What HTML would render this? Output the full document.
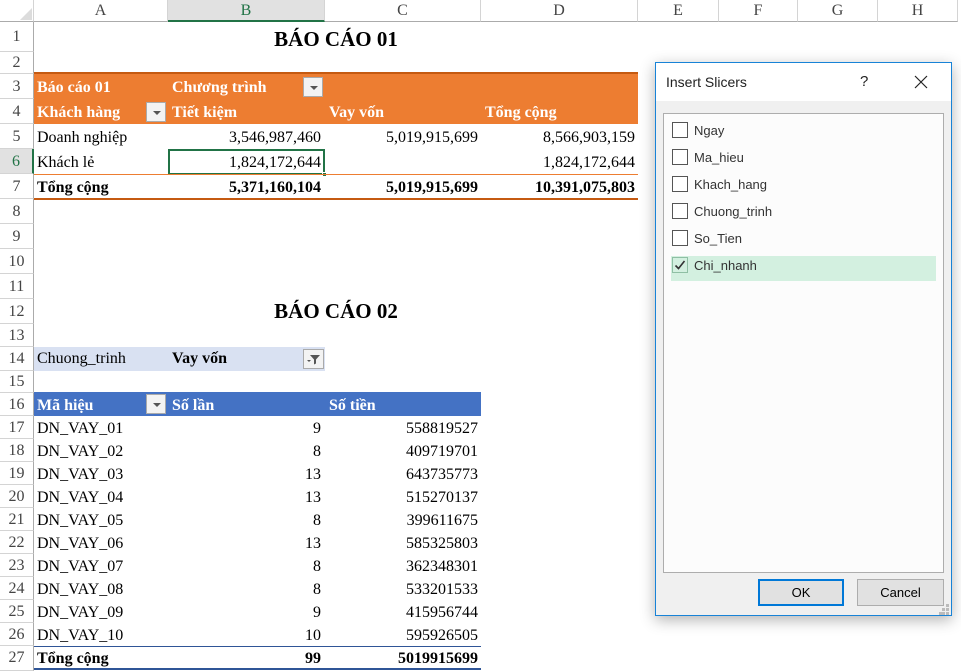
<!DOCTYPE html>
<html><head><meta charset="utf-8"><style>
*{margin:0;padding:0;box-sizing:border-box}
body{width:961px;height:671px;overflow:hidden;background:#fff;position:relative;font-family:"Liberation Serif","Noto Serif CJK SC",serif;font-size:16px;color:#000}
.a{position:absolute;white-space:nowrap}
.ch{position:absolute;top:0;height:22px;border-right:1px solid #d4d4d4;border-bottom:1px solid #ababab;text-align:center;line-height:22px;color:#444;font-size:16px}
.rh{position:absolute;left:0;width:34px;border-bottom:1px solid #d4d4d4;border-right:1px solid #ababab;text-align:center;color:#444}
.t{position:absolute;white-space:nowrap;line-height:1}
.r{text-align:right}
.b{font-weight:bold}
.btn{position:absolute;width:20px;height:20px;background:#f3f3f3;border:1px solid #aaa}
.btn:after{content:"";position:absolute;left:6px;top:8px;border-left:4px solid transparent;border-right:4px solid transparent;border-top:4px solid #555}
.cb{position:absolute;left:672px;width:16px;height:16px;border:1px solid #555;background:#fff}
.lbl{position:absolute;left:694px;font-family:"Liberation Sans",sans-serif;font-size:13px;color:#333}
</style></head><body>
<!-- column headers -->
<div class="ch" style="left:0;width:34px;background:#fff"></div>
<div class="a" style="left:20px;top:8px;border-left:12px solid transparent;border-bottom:12px solid #dcdcdc"></div>
<div class="ch" style="left:34px;width:134px">A</div>
<div class="ch" style="left:168px;width:157px;background:#e1e1e1;color:#217346;border-bottom:2px solid #217346">B</div>
<div class="ch" style="left:325px;width:156px">C</div>
<div class="ch" style="left:481px;width:157px">D</div>
<div class="ch" style="left:638px;width:81px">E</div>
<div class="ch" style="left:719px;width:79px">F</div>
<div class="ch" style="left:798px;width:80px">G</div>
<div class="ch" style="left:878px;width:80px">H</div>
<!-- row headers -->
<div class="rh" style="top:22px;height:30px;line-height:30px">1</div>
<div class="rh" style="top:52px;height:22px;line-height:22px">2</div>
<div class="rh" style="top:74px;height:25px;line-height:25px">3</div>
<div class="rh" style="top:99px;height:25px;line-height:25px">4</div>
<div class="rh" style="top:124px;height:25px;line-height:25px">5</div>
<div class="rh" style="top:149px;height:25px;line-height:25px;background:#e1e1e1;color:#217346;border-right:2px solid #217346">6</div>
<div class="rh" style="top:174px;height:25px;line-height:25px">7</div>
<div class="rh" style="top:199px;height:25px;line-height:25px">8</div>
<div class="rh" style="top:224px;height:25px;line-height:25px">9</div>
<div class="rh" style="top:249px;height:25px;line-height:25px">10</div>
<div class="rh" style="top:274px;height:25px;line-height:25px">11</div>
<div class="rh" style="top:299px;height:25px;line-height:25px">12</div>
<div class="rh" style="top:324px;height:23px;line-height:23px">13</div>
<div class="rh" style="top:347px;height:24px;line-height:24px">14</div>
<div class="rh" style="top:371px;height:22px;line-height:22px">15</div>
<div class="rh" style="top:393px;height:23px;line-height:23px">16</div>
<div class="rh" style="top:416px;height:23px;line-height:23px">17</div>
<div class="rh" style="top:439px;height:23px;line-height:23px">18</div>
<div class="rh" style="top:462px;height:23px;line-height:23px">19</div>
<div class="rh" style="top:485px;height:23px;line-height:23px">20</div>
<div class="rh" style="top:508px;height:23px;line-height:23px">21</div>
<div class="rh" style="top:531px;height:23px;line-height:23px">22</div>
<div class="rh" style="top:554px;height:23px;line-height:23px">23</div>
<div class="rh" style="top:577px;height:23px;line-height:23px">24</div>
<div class="rh" style="top:600px;height:23px;line-height:23px">25</div>
<div class="rh" style="top:623px;height:23px;line-height:23px">26</div>
<div class="rh" style="top:646px;height:25px;line-height:23px">27</div>

<!-- Report 01 -->
<div class="t b" style="left:34px;width:604px;top:29px;text-align:center;font-size:21px">BÁO CÁO 01</div>
<div class="a" style="left:34px;top:72px;width:604px;height:52px;background:#ED7D31;border-top:2px solid #C55A11"></div>
<div class="t b" style="left:37px;top:80px;color:#fff">Báo cáo 01</div>
<div class="t b" style="left:172px;top:80px;color:#fff">Chương trình</div>
<div class="btn" style="left:303px;top:77px"></div>
<div class="t b" style="left:37px;top:105px;color:#fff">Khách hàng</div>
<div class="btn" style="left:146px;top:102px"></div>
<div class="t b" style="left:172px;top:105px;color:#fff">Tiết kiệm</div>
<div class="t b" style="left:329px;top:105px;color:#fff">Vay vốn</div>
<div class="t b" style="left:485px;top:105px;color:#fff">Tổng cộng</div>

<div class="t" style="left:37px;top:130px">Doanh nghiệp</div>
<div class="t r" style="left:168px;width:153px;top:130px">3,546,987,460</div>
<div class="t r" style="left:325px;width:153px;top:130px">5,019,915,699</div>
<div class="t r" style="left:481px;width:154px;top:130px">8,566,903,159</div>
<div class="t" style="left:37px;top:155px">Khách lẻ</div>
<div class="t r" style="left:168px;width:153px;top:155px">1,824,172,644</div>
<div class="t r" style="left:481px;width:154px;top:155px">1,824,172,644</div>
<div class="a" style="left:168px;top:149px;width:157px;height:26px;border:2px solid #217346"></div>
<div class="a" style="left:322px;top:172px;width:5px;height:5px;background:#217346;border:1px solid #fff"></div>
<div class="a" style="left:34px;top:174px;width:604px;height:26px;border-top:1px solid #ED7D31;border-bottom:2px solid #C55A11"></div>
<div class="t b" style="left:37px;top:180px">Tổng cộng</div>
<div class="t b r" style="left:168px;width:153px;top:180px">5,371,160,104</div>
<div class="t b r" style="left:325px;width:153px;top:180px">5,019,915,699</div>
<div class="t b r" style="left:481px;width:154px;top:180px">10,391,075,803</div>

<!-- Report 02 -->
<div class="t b" style="left:34px;width:604px;top:301px;text-align:center;font-size:21px">BÁO CÁO 02</div>
<div class="a" style="left:34px;top:347px;width:291px;height:24px;background:#D9E1F2"></div>
<div class="t" style="left:37px;top:351px">Chuong_trinh</div>
<div class="t b" style="left:172px;top:351px">Vay vốn</div>
<div class="a" style="left:303px;top:349px;width:21px;height:20px;background:#f3f3f3;border:1px solid #aaa">
<svg width="19" height="18" viewBox="0 0 19 18"><path d="M6 5h10l-4 4.5v4l-2 1v-5z" fill="#555"/><path d="M3 10l2 2 2-2z" fill="#555"/></svg></div>
<div class="a" style="left:34px;top:392px;width:447px;height:24px;background:#4472C4"></div>
<div class="t b" style="left:37px;top:398px;color:#fff">Mã hiệu</div>
<div class="btn" style="left:146px;top:394px"></div>
<div class="t b" style="left:172px;top:398px;color:#fff">Số lần</div>
<div class="t b" style="left:329px;top:398px;color:#fff">Số tiền</div>

<div class="t" style="left:37px;top:421px">DN_VAY_01</div><div class="t r" style="left:168px;width:153px;top:421px">9</div><div class="t r" style="left:325px;width:153px;top:421px">558819527</div>
<div class="t" style="left:37px;top:444px">DN_VAY_02</div><div class="t r" style="left:168px;width:153px;top:444px">8</div><div class="t r" style="left:325px;width:153px;top:444px">409719701</div>
<div class="t" style="left:37px;top:467px">DN_VAY_03</div><div class="t r" style="left:168px;width:153px;top:467px">13</div><div class="t r" style="left:325px;width:153px;top:467px">643735773</div>
<div class="t" style="left:37px;top:490px">DN_VAY_04</div><div class="t r" style="left:168px;width:153px;top:490px">13</div><div class="t r" style="left:325px;width:153px;top:490px">515270137</div>
<div class="t" style="left:37px;top:513px">DN_VAY_05</div><div class="t r" style="left:168px;width:153px;top:513px">8</div><div class="t r" style="left:325px;width:153px;top:513px">399611675</div>
<div class="t" style="left:37px;top:536px">DN_VAY_06</div><div class="t r" style="left:168px;width:153px;top:536px">13</div><div class="t r" style="left:325px;width:153px;top:536px">585325803</div>
<div class="t" style="left:37px;top:559px">DN_VAY_07</div><div class="t r" style="left:168px;width:153px;top:559px">8</div><div class="t r" style="left:325px;width:153px;top:559px">362348301</div>
<div class="t" style="left:37px;top:582px">DN_VAY_08</div><div class="t r" style="left:168px;width:153px;top:582px">8</div><div class="t r" style="left:325px;width:153px;top:582px">533201533</div>
<div class="t" style="left:37px;top:605px">DN_VAY_09</div><div class="t r" style="left:168px;width:153px;top:605px">9</div><div class="t r" style="left:325px;width:153px;top:605px">415956744</div>
<div class="t" style="left:37px;top:628px">DN_VAY_10</div><div class="t r" style="left:168px;width:153px;top:628px">10</div><div class="t r" style="left:325px;width:153px;top:628px">595926505</div>
<div class="a" style="left:34px;top:646px;width:447px;height:24px;border-top:1px solid #2F5597;border-bottom:2px solid #2F5597"></div>
<div class="t b" style="left:37px;top:651px">Tổng cộng</div><div class="t b r" style="left:168px;width:153px;top:651px">99</div><div class="t b r" style="left:325px;width:153px;top:651px">5019915699</div>

<!-- Dialog -->
<div class="a" style="left:655px;top:62px;width:297px;height:554px;background:#f0f0f0;border:1px solid #1883d7;box-shadow:0 4px 14px rgba(0,0,0,0.3)">
 <div class="a" style="left:0;top:0;width:295px;height:38px;background:#fff"></div>
 <div class="a" style="left:10px;top:11px;font-family:'Liberation Sans',sans-serif;font-size:14px;color:#222">Insert Slicers</div>
 <div class="a" style="left:204px;top:10px;font-family:'Liberation Sans',sans-serif;font-size:15px;color:#222">?</div>
 <svg class="a" style="left:258px;top:12px" width="14" height="14"><path d="M1 1L13 13M13 1L1 13" stroke="#222" stroke-width="1.2"/></svg>
 <div class="a" style="left:7px;top:50px;width:281px;height:460px;background:#fcfcfc;border:1px solid #adadad"></div>
 <div class="a" style="left:102px;top:516px;width:86px;height:27px;background:#e1e1e1;border:2px solid #0078d7;text-align:center;line-height:23px;font-family:'Liberation Sans',sans-serif;font-size:13px">OK</div>
 <div class="a" style="left:201px;top:516px;width:87px;height:27px;background:#e1e1e1;border:1px solid #adadad;text-align:center;line-height:25px;font-family:'Liberation Sans',sans-serif;font-size:13px">Cancel</div>
 <svg class="a" style="left:283px;top:541px" width="11" height="11"><g fill="#bbb"><rect x="7" y="0" width="3" height="3"/><rect x="3" y="4" width="3" height="3"/><rect x="7" y="4" width="3" height="3"/><rect x="0" y="8" width="3" height="3"/><rect x="3" y="8" width="3" height="3"/><rect x="7" y="8" width="3" height="3"/></g></svg>
</div>
<div class="a" style="left:671px;top:256px;width:265px;height:25px;background:#d3f0e0"></div>
<div class="cb" style="top:122px"></div><div class="lbl" style="top:123px">Ngay</div>
<div class="cb" style="top:149px"></div><div class="lbl" style="top:150px">Ma_hieu</div>
<div class="cb" style="top:176px"></div><div class="lbl" style="top:177px">Khach_hang</div>
<div class="cb" style="top:203px"></div><div class="lbl" style="top:204px">Chuong_trinh</div>
<div class="cb" style="top:230px"></div><div class="lbl" style="top:231px">So_Tien</div>
<div class="cb" style="top:257px;border-color:#8fbfa4;background:#d3f0e0"><svg width="14" height="14" style="position:absolute;left:0;top:0"><path d="M2.5 7.5L5.5 10.5L11.5 3" stroke="#333" stroke-width="1.6" fill="none"/></svg></div><div class="lbl" style="top:258px">Chi_nhanh</div>
</body></html>
